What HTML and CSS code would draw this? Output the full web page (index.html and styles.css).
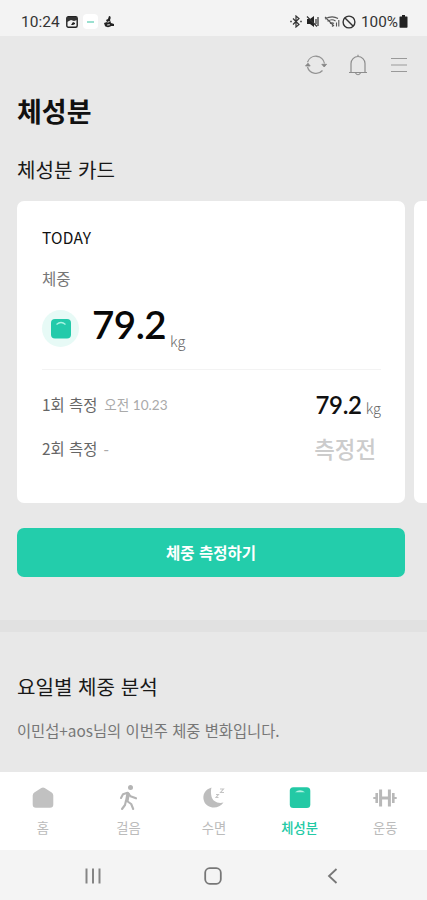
FILE: index.html
```html
<!DOCTYPE html>
<html lang="ko">
<head>
<meta charset="utf-8">
<title>체성분</title>
<link rel="stylesheet" href="styles.css">
</head>
<body>
<div class="phone">
  <header class="status">
    <span class="clock">10:24</span>
    <svg class="s-image" width="12" height="12" viewBox="0 0 12 12"><rect x=".8" y=".8" width="10.4" height="10.4" rx="1.5" fill="none" stroke="#222" stroke-width="1.4"/><path d="M1 1h10v3L8 5 5 4 1 6z" fill="#333"/><path d="M5 9l2-3 2 1v1l-2 1z" fill="#222"/></svg>
    <span class="s-app"></span>
    <svg class="s-bell" width="12" height="13" viewBox="0 0 12 13"><path d="M6 1c2 0 2 2 1 4l1 3 3 1v2H8c-1 1.500-5 1.500-6 0L1 8l3-1-1-2 2-1z" fill="#222"/><path d="M4.500 7.200l2-.7M4.200 10l2.600-.3" stroke="#eee"/></svg>
    <div class="status-right">
      <svg width="12" height="13" viewBox="0 0 12 13" fill="none" stroke="#333" stroke-width="1.200"><path d="M3 3.500l6 6-3 2.500V1l3 2.500-6 6"/><path d="M1 5.700v1.600M11 5.700v1.600" stroke-width="1.500"/></svg>
      <svg class="s-mute" width="13" height="13" viewBox="0 0 13 13"><path d="M1 4h3l4-3v11L4 9H1z" fill="#222"/><path d="M1 1.500l10 10M10 4v5M12 2v9" stroke="#333" stroke-width="1.200"/></svg>
      <svg class="s-wifi" width="17" height="13" viewBox="0 0 17 13" fill="none" stroke="#555" stroke-width="1.100"><path d="M1 4Q8 0 14 3.500M3.500 6.200Q8 3.300 11.500 6M6 8.500Q8 7 10 8.500M1 2l9 9"/><path d="M12.500 7.500v4M14.800 5v6.500M8 10.500l1 1"/></svg>
      <svg class="s-block" width="14" height="14" viewBox="0 0 14 14" fill="none" stroke="#333" stroke-width="1.400"><circle cx="7" cy="7" r="5.900"/><path d="M3 3l8 8"/></svg>
      <span class="battery-text">100%</span>
      <svg width="9" height="13" viewBox="0 0 9 13"><path d="M3 0h3v1.500h2q.5 0 .5.500v10q0 .7-.7.700H1.200q-.7 0-.7-.7V2q0-.5.500-.5h2z" fill="#222"/></svg>
    </div>
  </header>

  <main class="content">
    <div class="actions">
      <svg width="24" height="22" viewBox="0 0 24 22" fill="none" stroke="#949494" stroke-width="1.300"><path d="M3.500 8.200A8.800 8.800 0 0 1 20.500 9.500M18.500 16.500A8.800 8.800 0 0 1 3.500 13"/><path d="M1.500 12L4 9.200 6.200 12zM17.800 10.300h4.800L20.200 13z" fill="#858585" stroke="#858585" stroke-width=".8"/></svg>
      <svg class="bell" width="20" height="22" viewBox="0 0 20 22" fill="none" stroke="#8d8d8d" stroke-width="1.200"><path d="M1 18.500h18M3 18V9.500a7 7 0 0 1 14 0V18M10 2.700V.7M7.500 19q2.500 3.500 5 0"/></svg>
      <svg class="menu" width="16" height="16" viewBox="0 0 16 16" stroke="#999" stroke-width="1.200"><path d="M0 1.500h16M0 8h16M0 14.500h16"/></svg>
    </div>
    <h1>체성분</h1>
    <h2 class="card-heading">체성분 카드</h2>

    <div class="carousel">
      <section class="card">
        <div class="today">TODAY</div>
        <div class="metric-name">체중</div>
        <div class="metric">
          <span class="metric-icon"><svg width="20" height="20" viewBox="0 0 20 20"><rect width="20" height="19.500" rx="4" fill="#23caaa"/><path d="M5.500 5.500q4.500-4 9 0" fill="none" stroke="#a8f4e3" stroke-width="1.300"/></svg></span>
          <strong class="big">79.2</strong><span class="kg big-kg">kg</span>
        </div>
        <div class="record">
          <span class="count">1회 측정</span><span class="time">오전 10.23</span>
          <span class="value"><strong>79.2</strong><span class="kg">kg</span></span>
        </div>
        <div class="record second">
          <span class="count">2회 측정</span><span class="time dash">-</span>
          <span class="pending">측정전</span>
        </div>
      </section>
      <section class="card next"></section>
    </div>
    <button class="measure">체중 측정하기</button>
    <div class="divider"></div>
    <h2 class="week-heading">요일별 체중 분석</h2>
    <p class="week-text">이민섭+aos님의 이번주 체중 변화입니다.</p>
  </main>

  <nav class="tabs">
    <a class="tab"><svg width="24" height="26" viewBox="0 0 24 26"><path d="M10.300 3.100q1.700-1.100 3.400 0l7 4.400q1.500 1 1.600 3v9q0 3.300-3.300 3.300H5q-3.300 0-3.300-3.300v-9q.1-2 1.600-3z" fill="#c1c1c1"/></svg><span>홈</span></a>
    <a class="tab"><svg width="24" height="26" viewBox="0 0 24 26" fill="none" stroke="#b4b4b4" stroke-width="2.100" stroke-linecap="round" stroke-linejoin="round"><circle cx="14.500" cy="2.600" r="2.500" fill="#b4b4b4" stroke="none"/><path d="M5 13l2-3.700 4.500-1.500 3 3.500 5.500 2"/><path d="M11.500 8l-1.300 7.500 5 3.500 2 5M10 15.500l-1 4.500-3 4" /><path d="M12.300 9l-1 6" stroke-width="3"/></svg><span>걸음</span></a>
    <a class="tab"><svg width="24" height="26" viewBox="0 0 24 26"><path d="M9.500 2.500C3 4.500 0 10 2 16c2.200 7.200 14 9.500 19.500 1.500-6 1.500-11-1.500-12-6-.7-3.500-.8-6.500 0-9z" fill="#bdbdbd"/><path d="M18 4h3.500L18.500 7.500H22M14 9.500h2.500l-2.500 3h2.500" fill="none" stroke="#c4c4c4" stroke-width="1.100"/></svg><span>수면</span></a>
    <a class="tab active"><svg width="24" height="26" viewBox="0 0 24 26"><rect x="1.800" y="2.200" width="20.500" height="20.800" rx="3.500" fill="#23c9a5"/><path d="M7 7.200q5-4 10 0z" fill="#b1f2e2"/></svg><span>체성분</span></a>
    <a class="tab"><svg width="24" height="26" viewBox="0 0 24 26" fill="none" stroke="#b8b8b8"><path d="M3.700 8v10M20.300 8v10" stroke-width="2.600"/><path d="M7.600 4.500v17M16.400 4.500v17" stroke-width="3"/><path d="M9 13h6" stroke-width="3"/><path d="M.3 13h3M20.700 13h3" stroke-width="2"/></svg><span>운동</span></a>
  </nav>
  <div class="system">
    <svg width="18" height="18" viewBox="0 0 18 18" stroke="#858585" stroke-width="2"><path d="M2.500 1.500v15M9 1.500v15M15.500 1.500v15"/></svg>
    <svg width="18" height="18" viewBox="0 0 18 18" fill="none" stroke="#777" stroke-width="1.800"><rect x="1.200" y="1.200" width="15.600" height="15.600" rx="4.500"/></svg>
    <svg width="18" height="18" viewBox="0 0 18 18" fill="none" stroke="#777" stroke-width="1.800"><path d="M12.500 2L5 9l7.500 7"/></svg>
  </div>
</div>
</body>
</html>
```
FILE: styles.css
```css
* { box-sizing: border-box; }
body {
  margin: 0;
  font-family: "Noto Sans CJK KR", sans-serif;
  background: #e8e8e8;
}
h1, h2, p { margin: 0; white-space: nowrap; }
svg { display: block; flex: none; }
.phone {
  width: 427px;
  height: 900px;
  display: flex;
  flex-direction: column;
  overflow: hidden;
}
.status {
  height: 36px;
  flex: none;
  display: flex;
  align-items: center;
  padding: 7px 19px 0 21px;
  background: #f3f3f3;
  color: #333;
  font-family: Roboto, sans-serif;
  font-size: 15.5px;
}
.clock { width: 45px; }
.s-app {
  width: 15px;
  height: 15px;
  margin-left: 5px;
  border-radius: 4px;
  background: #fff;
  display: flex;
  align-items: center;
  justify-content: center;
}
.s-app::before { content: ""; width: 7px; height: 2px; background: #9be0d0; }
.s-bell { margin-left: 5px; }
.status-right { display: flex; align-items: center; margin-left: auto; }
.s-mute { margin-left: 4px; }
.s-wifi { margin-left: 5px; }
.s-block { margin-left: 1px; }
.battery-text { margin: 0 1px 0 5px; font-size: 15.3px; }
.content { flex: 1; min-height: 0; }
.actions {
  height: 48px;
  padding: 10px 20px 0 0;
  display: flex;
  align-items: center;
  justify-content: flex-end;
}
.bell { margin-left: 20px; margin-top: -1px; }
.menu { margin-left: 23px; }
h1 {
  height: 54px;
  padding-left: 17px;
  font-size: 27px;
  line-height: 54px;
  color: #111;
}
h2 { padding-left: 17px; font-size: 20.1px; font-weight: 500; color: #181818; }
.card-heading { height: 63px; line-height: 63px; font-weight: 400; }
.carousel { display: flex; gap: 9px; padding-left: 17px; overflow: hidden; }
.card {
  flex: none;
  width: 388px;
  height: 302px;
  padding: 23px 24px 0 25px;
  border-radius: 7px;
  background: #fff;
}
.today { height: 26px; line-height: 26px; font-size: 15.5px; font-weight: 400; color: #111; letter-spacing: .2px; }
.metric-name { height: 24px; margin-top: 16px; line-height: 24px; font-size: 15.5px; color: #777; }
.metric {
  height: 80px;
  display: flex;
  align-items: flex-start;
  border-bottom: 1px solid #f3f3f3;
}
.metric-icon {
  width: 37px;
  height: 37px;
  margin-top: 20px;
  border-radius: 50%;
  background: #e7faf6;
  display: flex;
  align-items: center;
  justify-content: center;
}
.big {
  margin: 10px 0 0 13px;
  font-family: Lato, sans-serif;
  font-size: 38.5px;
  font-weight: 600;
  line-height: 48px;
  letter-spacing: -.5px;
  color: #080808;
}
.kg { font-size: 14.5px; font-weight: 300; color: #666; }
.big-kg { margin: 39px 0 0 4px; line-height: 24px; }
.record { height: 44px; margin-top: 12px; display: flex; align-items: center; }
.record.second { margin-top: 0; }
.count { font-size: 15.4px; color: #666; }
.time {
  margin-left: 7px;
  font-family: Lato, "Noto Sans CJK KR", sans-serif;
  font-size: 13.6px;
  color: #aaa;
}
.dash { font-size: 16px; margin-left: 6px; }
.value { margin-left: auto; display: flex; align-items: baseline; }
.value strong { font-family: Lato, sans-serif; font-size: 24px; font-weight: 600; letter-spacing: -.3px; color: #111; }
.value .kg { margin-left: 4px; }
.pending { margin-left: auto; margin-right: 5px; padding-bottom: 1px; font-size: 22.4px; font-weight: 500; color: #ccc; }
.measure {
  display: block;
  width: 388px;
  height: 49px;
  margin: 25px 0 0 17px;
  padding: 0 0 2px;
  border: 0;
  border-radius: 7px;
  background: #23cdab;
  color: #fff;
  font: bold 15.5px "Noto Sans CJK KR", sans-serif;
}
.divider { height: 12px; margin-top: 43px; background: #e1e1e1; }
.week-heading { height: 30px; margin-top: 40px; line-height: 30px; font-weight: 400; }
.week-text { height: 24px; margin-top: 16px; padding-left: 17px; font-size: 15.35px; line-height: 24px; color: #777; }
.tabs {
  flex: none;
  height: 78px;
  padding-top: 13px;
  display: grid;
  grid-template-columns: repeat(5, 85.6px);
  background: #fff;
}
.tab {
  display: flex;
  flex-direction: column;
  align-items: center;
  font-size: 13.3px;
  line-height: 20px;
  color: #bbb;
}
.tab span { margin-top: 7px; }
.active { color: #23c9a5; font-weight: 500; }
.system {
  flex: none;
  height: 50px;
  padding: 2px 85px 0 84px;
  display: flex;
  align-items: center;
  justify-content: space-between;
  background: #f4f4f4;
}
```
